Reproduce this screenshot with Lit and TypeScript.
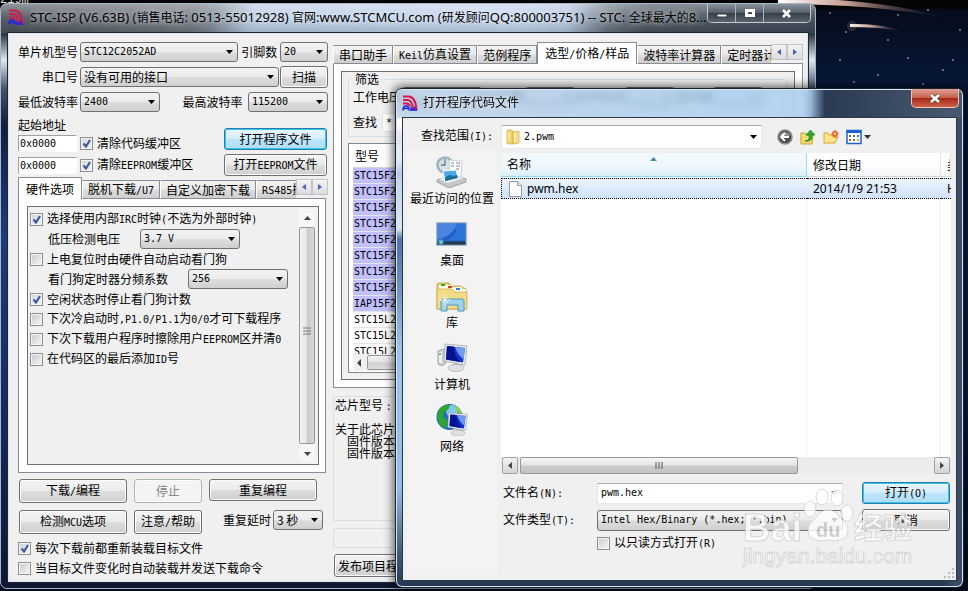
import { LitElement, html, svg, css, nothing } from "lit";
import { customElement, property } from "lit/decorators.js";
import { classMap } from "lit/directives/class-map.js";

/** Splits a label so that its Latin runs take the half-width mono face. */
const mix = (text: string) =>
  text
    .split(/([\x20-\x7e]+)/)
    .filter((part) => part !== "")
    .map((part) => (/^[\x20-\x7e]+$/.test(part) ? html`<span class="latin">${part}</span>` : part));

const logo = svg`
  <g fill="none">
    <path stroke="#d4194f" stroke-width="2" d="M1 1.500h6q7 1 7.500 14M1 5h5q5 1 5 10.500M1 8.500h4q3 1 3 3"/>
    <path stroke="#1b22e8" stroke-width="1.500" d="M1 15.500q0-4.500 3-4.500q3 0 3 4.500M2 13.500h4M9 12v4M12.500 11.500v4M9 15h6"/>
  </g>`;

const controls = css`
  * { box-sizing: border-box; }
  .latin, .mono { font-family: "DejaVu Sans Mono", "Liberation Mono", "Noto Sans CJK SC", monospace; font-size: 10px; }
  label, .text { white-space: nowrap; }
  button, select, input { font: inherit; color: #000; margin: 0; }
  select.mono, input.mono { font-family: "DejaVu Sans Mono", "Liberation Mono", monospace; font-size: 10px; }
  .btn {
    height: 22px; padding: 0; border: 1px solid #707070; border-radius: 3px; white-space: nowrap;
    background: linear-gradient(#f4f4f4, #ebebeb 48%, #dddddd 52%, #cfcfcf);
    box-shadow: inset 0 0 0 1px #fbfbfb; line-height: 18px; text-align: center;
  }
  .btn.hot {
    border-color: #2c7aa8; background: linear-gradient(#eaf6fd, #d5edfa 48%, #bde6fd 52%, #b0dcf5);
    box-shadow: inset 0 0 0 1px #2fc9f4;
  }
  .btn:disabled { color: #838383; border-color: #adb2b5; background: #f4f4f4; }
  .drop {
    appearance: none; height: 20px; padding: 0 16px 0 3px; border: 1px solid #707070; border-radius: 3px;
    background: url('data:image/svg+xml,<svg xmlns="http://www.w3.org/2000/svg" width="7" height="4"><path d="M0 0h7L3.500 4z"/></svg>') no-repeat right 4px center,
      linear-gradient(#f3f3f3, #ebebeb 48%, #dddddd 52%, #d0d0d0);
    line-height: 16px;
  }
  .check { display: flex; align-items: center; gap: 4px; height: 20px; }
  .check input {
    appearance: none; flex: none; width: 13px; height: 13px; border: 1px solid #8e8f8f;
    background: linear-gradient(135deg, #c6cacf, #f6f6f6); box-shadow: inset 0 0 0 1px #f4f4f4;
  }
  .check input:checked {
    background: url('data:image/svg+xml,<svg xmlns="http://www.w3.org/2000/svg" width="11" height="11"><path d="M2.500 5.500l2.500 3L9 2" fill="none" stroke="%233a539b" stroke-width="2"/></svg>') center no-repeat,
      linear-gradient(135deg, #cdd2dc, #f6f6f6);
  }
`;

const windowFrame = css`
  :host { display: flex; flex-direction: column; border-radius: 7px; box-sizing: border-box; }
  .titlebar { display: flex; align-items: center; flex: none; }
  .title { flex: 1; min-width: 0; overflow: hidden; white-space: nowrap; font-family: "Noto Sans", "Noto Sans CJK SC", sans-serif; }
`;

@customElement("tab-strip")
class TabStrip extends LitElement {
  @property({ attribute: false }) tabs: string[] = [];
  @property({ type: Number }) active = 0;

  static styles = [
    controls,
    css`
      :host { display: flex; align-items: flex-end; height: 21px; position: relative; z-index: 1; }
      .tabs { display: flex; align-items: flex-end; flex: 1; min-width: 0; overflow: hidden; height: 22px; margin-bottom: -1px; }
      .tab {
        flex: none; height: 19px; padding: 0 5px; border: 1px solid #898c95; border-left-color: #fff; white-space: nowrap;
        background: linear-gradient(#f2f2f2, #ebebeb 48%, #dddddd 52%, #cfcfcf); line-height: 16px;
      }
      .tab.on { height: 22px; padding: 0 7px; background: #fff; border-color: #898c95; border-bottom: 0; }
      .arrow { flex: none; align-self: flex-start; width: 16px; height: 16px; margin-top: 2px; padding: 0; border: 1px solid #c3c3c8; background: linear-gradient(#f4f4f4, #dcdce0); display: grid; place-items: center; }
    `,
  ];

  render() {
    return html`
      <div class="tabs">
        ${this.tabs.map((t, i) => html`<button class=${classMap({ tab: true, on: i === this.active })}>${mix(t)}</button>`)}
      </div>
      <button class="arrow" aria-label="left"><svg width="4" height="6"><path d="M4 0v6L0 3z" fill="#4a62b0"/></svg></button>
      <button class="arrow" aria-label="right"><svg width="4" height="6"><path d="M0 0v6L4 3z" fill="#4a62b0"/></svg></button>
    `;
  }
}

@customElement("isp-window")
class IspWindow extends LitElement {
  static styles = [
    controls,
    windowFrame,
    css`
      :host {
        padding: 0 6px 5px; border: 1px solid #a8b4c4;
        background:
          linear-gradient(#ffffff60, #ffffff10 14px, #00000020 28px, transparent 29px),
          linear-gradient(100deg, #4c535c 0, #6f7780 190px, #7d8996 210px, #b9cce4 250px, #c3d5ec 500px, #b4c8e0 560px, #6d7986 600px, #48525e 640px, #3e4956 100%) 0 0 / 100% 29px no-repeat,
          linear-gradient(#2b3542 30px, #dfe9f2 56px, #44536b 85px, #0e1f42 120px, #1d3a7c 230px, #142a5c 420px, #0b1733);
      }
      .titlebar { height: 28px; align-items: flex-start; padding-left: 1px; }
      .logo { margin: 5px 6px 0 0; flex: none; }
      .title { height: 27px; padding-top: 1px; line-height: 24px; font-size: 12px; text-shadow: 0 0 5px #ffffffa0, 0 0 8px #ffffff80; }
      .title .latin { font-family: "Noto Sans", sans-serif; font-size: 13px; }
      .caption { display: flex; flex: none; border: 1px solid #c3cad2; border-top: 0; border-radius: 0 0 5px 5px; height: 19px; overflow: hidden; margin-right: -2px; }
      .caption button { width: 28px; padding: 0; border: 0; border-right: 1px solid #aab3bd; background: linear-gradient(#8a929b, #56606b 48%, #36404b 52%, #59646f); display: grid; place-items: center; }
      .caption .close { width: 46px; border: 0; }
      .client {
        flex: 1; min-height: 0; background: #f0f0f0; border: 1px solid #1f2732; outline: 1px solid #dbe3ec; outline-offset: -2px;
        display: grid; grid-template-columns: 310px minmax(0, 1fr); gap: 5px; padding: 9px 5px 6px 10px;
      }
      .left, .right { min-width: 0; display: flex; flex-direction: column; }
      .rows { display: grid; gap: 5px; }
      .row { display: flex; align-items: center; height: 20px; }
      .row .name { width: 62px; padding-right: 2px; text-align: right; }
      .grow { flex: 1; }
      .w48 { width: 48px; } .w50 { width: 50px; } .w80 { width: 80px; } .w100 { width: 100px; } .w158 { width: 158px; } .w199 { width: 199px; }
      .push { margin-left: auto; }
      .start { display: flex; justify-content: space-between; align-items: flex-end; margin-top: 6px; }
      .start .text { line-height: 14px; height: 14px; }
      .addr { display: flex; align-items: center; gap: 3px; height: 22px; }
      .addr > input { width: 59px; height: 17px; border: 1px solid #a0a0a0; border-right-color: #fff; border-bottom-color: #fff; padding: 0 1px; }
      .stack { display: grid; gap: 4px; width: 104px; padding-right: 1px; }
      .left tab-strip { margin-top: 1px; }
      .panel { flex: 1; min-height: 0; background: #fff; border: 1px solid #898c95; padding: 7px; }
      .left .panel { flex: none; height: 275px; padding: 7px 6px 7px 8px; margin-right: 2px; }
      .box { height: 100%; border: 1px solid #707070; background: #f0f0f0; display: flex; }
      .options { flex: 1; padding: 2px 0 0 2px; }
      .options .row .text { padding-left: 18px; }
      .options .drop { margin-left: 20px; }
      .vbar { width: 16px; margin: 2px 3px; background: #f6f6f6; display: flex; flex-direction: column; align-items: center; }
      .vbar svg { flex: none; height: 18px; }
      .thumb { flex: 1; width: 100%; border: 1px solid #979797; border-radius: 2px; background: linear-gradient(90deg, #f3f3f3, #e6e6e6 45%, #c9c9cc 55%, #dadade); display: grid; place-items: center; }
      .actions { display: grid; grid-template-columns: 108px 68px 114px; gap: 7px; padding: 6px 0 0 1px; }
      .actions .btn { height: 24px; }
      .actions .btn.w108 { width: 108px; height: 22px; }
      .delay { display: flex; align-items: center; justify-content: flex-end; height: 20px; gap: 2px; }
      .foot { padding-top: 4px; }
      .right .panel { flex: none; height: 325px; }
      .filter { padding: 7px 7px 6px 6px; flex: 1; min-width: 0; display: flex; flex-direction: column; gap: 6px; }
      fieldset { margin: -9px 0 0; padding: 0 4px; border: 1px solid #d5dfe5; border-radius: 3px; min-width: 0; height: 67px; }
      legend { padding: 0 2px; line-height: 18px; }
      fieldset .row { gap: 1px; }
      .volts { margin-top: -1px; gap: 4px; }
      .volts .drop { flex: none; }
      .find { margin-top: 5px; }
      .find input { width: 120px; height: 19px; border: 1px solid #e3e3e3; margin-left: 4px; padding: 0 3px; }
      .chips { flex: 1; min-height: 0; border: 1px solid #828790; background: #fff; display: flex; flex-direction: column; padding: 0 2px 1px 4px; }
      .scroll { flex: 1; min-height: 0; overflow: hidden; }
      table { border-collapse: separate; border-spacing: 0; width: 100%; table-layout: fixed; }
      th { height: 24px; text-align: left; font-weight: normal; padding: 0 2px; border-bottom: 1px solid #d5d5d5; }
      td { height: 16px; padding: 0 1px; border-bottom: 1px solid #e4e4e4; line-height: 15px; }
      td .mono { vertical-align: top; }
      .lit { background: #c0c0ff; }
      .hbar { flex: none; height: 17px; display: flex; align-items: center; background: #f0f0f0; }
      .hbar svg { width: 14px; }
      .hbar .thumb { height: 15px; background: linear-gradient(#f3f3f3, #e4e4e4 48%, #d0d0d0 52%, #dcdcdc); }
      .info { flex: none; margin-top: 8px; height: 125px; border: 1px solid #dadfe4; padding: 1px; line-height: 12px; overflow: hidden; }
      .info p { margin: 0; white-space: pre; }
      .info .first { line-height: 14px; margin-bottom: 9px; }
      .info .sub { padding-left: 12px; }
      .status { flex: none; height: 20px; border: 1px solid #dadfe4; margin: 7px 0 6px; }
      .publish { width: 80px; height: 23px; margin-left: 1px; }
    `,
  ];

  private option(text: string, checked = false) {
    return html`<label class="check"><input type="checkbox" .checked=${checked} /><span>${mix(text)}</span></label>`;
  }

  render() {
    const chips = [...Array(8).fill("STC15F2K08S2"), "IAP15F2K61S2", "STC15L2K08S2", "STC15L2K16S2", "STC15L2K24S2"];
    return html`
      <div class="titlebar">
        <svg class="logo" width="16" height="16">${logo}</svg>
        <div class="title">${mix("STC-ISP (V6.63B) (销售电话: 0513-55012928) 官网:www.STCMCU.com (研发顾问QQ:800003751) -- STC: 全球最大的8...")}</div>
        <div class="caption">
          <button aria-label="Minimize"><svg width="12" height="12"><path d="M1 7h10v3H1z" fill="#fff" stroke="#333"/></svg></button>
          <button aria-label="Maximize"><svg width="12" height="12"><path d="M2.500 3.500h7v5h-7z" fill="none" stroke="#fff" stroke-width="3"/></svg></button>
          <button class="close" aria-label="Close"><svg width="12" height="11"><path d="M2 2l7 7M9 2l-7 7" stroke="#fff" stroke-width="2.500"/></svg></button>
        </div>
      </div>
      <div class="client">
        <div class="left">
          <div class="rows">
            <div class="row">
              <label class="name" for="mcu">单片机型号</label>
              <select id="mcu" class="drop mono w158"><option>STC12C2052AD</option></select>
              <label class="push" for="pins">引脚数&nbsp;</label>
              <select id="pins" class="drop mono w48"><option>20</option></select>
            </div>
            <div class="row">
              <label class="name" for="port">串口号</label>
              <select id="port" class="drop w199"><option>没有可用的接口</option></select>
              <span class="grow"></span><button class="btn w48">扫描</button>
            </div>
            <div class="row">
              <label class="name" for="low">最低波特率</label>
              <select id="low" class="drop mono w80"><option>2400</option></select>
              <label class="push" for="high">最高波特率&nbsp;&nbsp;</label>
              <select id="high" class="drop mono w80"><option>115200</option></select>
            </div>
          </div>
          <div class="start">
            <div>
              <div class="text">起始地址</div>
              <div class="addr"><input class="mono" aria-label="代码地址" value="0x0000" />${this.option("清除代码缓冲区", true)}</div>
              <div class="addr"><input class="mono" aria-label="EEPROM地址" value="0x0000" />${this.option("清除EEPROM缓冲区", true)}</div>
            </div>
            <div class="stack">
              <button class="btn hot">打开程序文件</button>
              <button class="btn">${mix("打开EEPROM文件")}</button>
            </div>
          </div>
          <tab-strip .tabs=${["硬件选项", "脱机下载/U7", "自定义加密下载", "RS485控制"]}></tab-strip>
          <div class="panel">
            <div class="box">
              <div class="options">
                ${this.option("选择使用内部IRC时钟(不选为外部时钟)", true)}
                <div class="row"><label class="text" for="lvd">低压检测电压</label><select id="lvd" class="drop mono w100"><option>3.7 V</option></select></div>
                ${this.option("上电复位时由硬件自动启动看门狗")}
                <div class="row"><label class="text" for="wdt">看门狗定时器分频系数</label><select id="wdt" class="drop mono w100"><option>256</option></select></div>
                ${this.option("空闲状态时停止看门狗计数", true)}
                ${this.option("下次冷启动时,P1.0/P1.1为0/0才可下载程序")}
                ${this.option("下次下载用户程序时擦除用户EEPROM区并清0")}
                ${this.option("在代码区的最后添加ID号")}
              </div>
              <div class="vbar">
                <svg width="7" height="18"><path d="M0 11h7L3.500 7z" fill="#444"/></svg>
                <div class="thumb"><svg width="8" height="8"><path d="M0 1h8M0 4h8M0 7h8" stroke="#777"/></svg></div>
                <svg width="7" height="18"><path d="M0 8h7L3.500 12z" fill="#444"/></svg>
              </div>
            </div>
          </div>
          <div class="actions">
            <button class="btn">${mix("下载/编程")}</button>
            <button class="btn" disabled>停止</button>
            <button class="btn w108">重复编程</button>
            <button class="btn">${mix("检测MCU选项")}</button>
            <button class="btn">${mix("注意/帮助")}</button>
            <div class="delay"><label for="delay">重复延时</label><select id="delay" class="drop w50"><option>3 秒</option></select></div>
          </div>
          <div class="foot">
            ${this.option("每次下载前都重新装载目标文件", true)}
            ${this.option("当目标文件变化时自动装载并发送下载命令")}
          </div>
        </div>
        <div class="right">
          <tab-strip .active=${3} .tabs=${["串口助手", "Keil仿真设置", "范例程序", "选型/价格/样品", "波特率计算器", "定时器计算器"]}></tab-strip>
          <div class="panel">
            <div class="box">
              <div class="filter">
                <fieldset>
                  <legend>筛选</legend>
                  <div class="row volts">
                    <label for="volt">工作电压</label>
                    <select id="volt" class="drop w80"><option></option></select>
                    <label for="io">I/O口数</label>
                    <select id="io" class="drop w50"><option></option></select>
                    <label for="rom">EEPROM</label>
                    <select id="rom" class="drop w50"><option></option></select>
                    <label for="adc">定时器</label>
                    <select id="adc" class="drop w50"><option></option></select>
                  </div>
                  <div class="row find"><label for="find">查找</label><input id="find" class="mono" value="*" /></div>
                </fieldset>
                <div class="chips">
                  <div class="scroll">
                    <table>
                      <thead><tr><th>型号</th></tr></thead>
                      <tbody>${chips.map((c, i) => html`<tr class=${i < 9 ? "lit" : nothing}><td><span class="mono">${c}</span></td></tr>`)}</tbody>
                    </table>
                  </div>
                  <div class="hbar"><svg width="14" height="8"><path d="M8 0v8L4 4z" fill="#444"/></svg><div class="thumb"></div></div>
                </div>
              </div>
            </div>
          </div>
          <div class="info">
            <p class="first">芯片型号 ${mix(": STC12C2052AD")}</p>
            <p>关于此芯片的说明:</p>
            <p class="sub">固件版本说明</p>
            <p class="sub">固件版本说明</p>
          </div>
          <div class="status"></div>
          <button class="btn publish">发布项目程序</button>
        </div>
      </div>
    `;
  }
}

const monitor = svg`
  <path d="M17 19l9 2v4l-9-2z" fill="#c9ccd0"/>
  <ellipse cx="20" cy="26" rx="8" ry="3.500" fill="#dfe1e3" stroke="#a5a8ac" stroke-width=".6"/>
  <path d="M9 2l22 2-2 19-21-4z" fill="#e4e7ea" stroke="#9b9fa5" stroke-width=".7"/>
  <path d="M11 4l18 2-2 14.500-17-3z" fill="#1430d0"/>
  <path d="M11 4l7 .8q0 9 6 15.200l-14-2.500z" fill="#07138e"/>
  <path d="M19 5l10 1-1.500 11q-6-4-8.500-12z" fill="#6f9df5"/>`;

const places = [
  {
    name: "最近访问的位置",
    icon: svg`
      <path d="M1 24l18-6 11 5v3l-17 6-12-6z" fill="#c4c8cb" stroke="#82878c" stroke-width=".7"/>
      <path d="M3 23l16-5 9 4-16 5z" fill="#e9ebec"/>
      <circle cx="9" cy="9" r="7.500" fill="#d5e2ea" stroke="#9db1bd" stroke-width="2.500"/>
      <path d="M9 3v6H5" fill="none" stroke="#5f7f90" stroke-width="1.300"/>
      <path d="M13 4l13 1-1 16-11-1z" fill="#fcfcfc" stroke="#bcc0c3" stroke-width=".7"/>
      <path d="M15 7h3M20 7h4M20 10h4M20 13h3M15 10h3" stroke="#778b9d"/>
      <path d="M7 15l13-1 2 8-13 4z" fill="#4aa9e8" stroke="#fff"/>
      <path d="M9 22q4-5 8-2l4-1 1 3-13 3z" fill="#1d6f9d"/>`,
  },
  {
    name: "桌面",
    icon: svg`
      <path d="M0 4h31v24H0z" fill="#a9b9cb"/><path d="M1.500 5.500h28v21h-28z" fill="#2060c6"/>
      <path d="M1.500 5.500h20q-4 12-20 16z" fill="#4a86dd"/><path d="M20 5.500h9.500v17H9q14-5 11-17z" fill="#2f74d8"/>
      <path d="M1.500 23.500h28v3h-28z" fill="#243748"/><circle cx="5" cy="24" r="2.500" fill="#39b8e8"/><circle cx="5" cy="24" r="1" fill="#f3c23c"/>`,
  },
  {
    name: "库",
    icon: svg`
      <path d="M1 5q0-2 2-2h10l3 3h8l6 3v20H1z" fill="#e8cd73" stroke="#c29b3d" stroke-width=".8"/>
      <path d="M3 5h13v4H3zM12 7h14v4H12zM18 9h12v4H18z" fill="#fffdf0"/>
      <path d="M5 4h4v2H5z" fill="#24b42d"/><path d="M12 6h4v2h-4z" fill="#cf3f21"/><path d="M20 8h4v2h-4z" fill="#2486cf"/>
      <path d="M1 9h15l3 3h12v17H1z" fill="#f3dc86" stroke="#cfa54a" stroke-width=".8"/>
      <path d="M5 31V21q0-2 2-2h19q2 0 2 2v10h-6v-6H11v6z" fill="#9fd3ea" stroke="#4c9abe"/>
      <path d="M9 14v12M3 20h12M6 17l6 6M12 17l-6 6" stroke="#fff" stroke-width=".8"/>`,
  },
  {
    name: "计算机",
    icon: svg`
      <path d="M2 9l5-2 3 1v13l-4 3-4-2z" fill="#c8cbcf" stroke="#8c9095" stroke-width=".7"/>
      <path d="M3 10l3-.5v12l-3-1z" fill="#eef0f1"/><circle cx="4" cy="12" r="1" fill="#35b52b"/>${monitor}`,
  },
  {
    name: "网络",
    icon: svg`
      <circle cx="13.500" cy="13" r="13" fill="#1f6dbc"/>
      <circle cx="16" cy="7" r="6" fill="#7cc8ef"/>
      <path d="M3 6q5-6 11-5l-2 5-4 2-1 5 5 4-2 7-4-1q-7-8-3-17z" fill="#2fa52d"/>
      <path d="M18 1q7 3 8 9l-5-2z" fill="#8dd14e"/>
      <g transform="translate(5 7) scale(.85 .85)">${monitor}</g>`,
  },
];

@customElement("open-dialog")
class OpenDialog extends LitElement {
  static styles = [
    controls,
    windowFrame,
    css`
      :host {
        padding: 0 6px 6px; border: 1px solid #1c222b;
        background: linear-gradient(90deg, #b4cbe5c0, #a8cdf0d0 60%, #a9cbeed0 calc(100% - 152px), #33435bd0 calc(100% - 138px), #5f6f82c0) 0 0 / 100% 29px no-repeat,
          linear-gradient(90deg, transparent calc(100% - 20px), #3c4c66 calc(100% - 7px)) 0 29px no-repeat,
          linear-gradient(transparent 29px, #c3d9ee 100px, #d8e6f2 140px, #4f73ac 150px, #6f92c0 200px, #9cc4ec 260px, #92bce6 400px, #46617e 460px, #253650);
        backdrop-filter: blur(3px);
        box-shadow: inset 0 0 0 1px #d8e6f4, 0 0 10px 2px #000000a0;
      }
      .titlebar { height: 28px; gap: 5px; padding: 0; }
      .titlebar svg { flex: none; }
      .title { font-size: 12px; text-shadow: 0 0 6px #fff; }
      .close { align-self: flex-start; width: 48px; height: 19px; padding: 0; border: 1px solid #e9c5bd; border-top: 0; border-radius: 0 0 5px 5px; background: linear-gradient(#dfa094, #c8604e 48%, #a52a16 52%, #d0604a); display: grid; place-items: center; margin-right: -2px; }
      .client {
        flex: 1; min-height: 0; border: 1px solid #2d3846; background: #f0f0f0; padding: 7px 5px 5px 4px;
        display: grid; grid-template-columns: 90px minmax(0, 1fr); grid-template-rows: 24px minmax(0, 1fr); column-gap: 4px; row-gap: 2px;
      }
      .look { text-align: right; line-height: 20px; padding-right: 4px; }
      .bar { display: flex; align-items: center; gap: 7px; }
      .folder { position: relative; flex: 0 1 261px; margin-right: 8px; }
      .folder svg { position: absolute; left: 5px; top: 4px; }
      .folder .drop { width: 100%; height: 24px; padding-left: 22px; background-color: #fff; }
      .white.drop { border: 1px solid #abadb3; border-color: #abadb3 #e3e9ef #e3e9ef #e2e3ea; border-radius: 0; background: #fff url('data:image/svg+xml,<svg xmlns="http://www.w3.org/2000/svg" width="7" height="4"><path d="M0 0h7L3.500 4z"/></svg>') no-repeat right 4px center; }
      .tool { padding: 0; border: 0; background: none; display: flex; }
      .places { background: #f3f3f3; display: flex; flex-direction: column; gap: 10px; padding-top: 5px; }
      .place { padding: 0; border: 0; background: none; display: grid; justify-items: center; line-height: 18px; font-size: 12px; height: 52px; white-space: nowrap; }
      .main { min-width: 0; display: flex; flex-direction: column; }
      .files { flex: 1; min-height: 0; background: #fff; margin-top: 2px; overflow: hidden; display: flex; flex-direction: column; }
      table { width: 100%; border-collapse: separate; border-spacing: 0; table-layout: fixed; font-family: "Noto Sans", "Noto Sans CJK SC", sans-serif; }
      .c1 { width: 306px; } .c3 { width: 10px; }
      th { height: 24px; padding: 2px 6px 0; font-size: 12px; font-weight: normal; text-align: left; border-bottom: 1px solid #d5d5d5; border-right: 1px solid #e2e4e8; background: linear-gradient(#fff 50%, #f5f6f8); overflow: hidden; white-space: nowrap; }
      th.sorted { padding-top: 0; background: linear-gradient(#f2f9fc 50%, #d9eff9); border-color: #96d9f9; }
      .sort { display: block; margin: 0 auto -4px; }
      td { height: 21px; padding: 0 6px; font-size: 12px; line-height: 18px; white-space: nowrap; overflow: hidden; border: 0 dotted #000; border-width: 1px 0; background: linear-gradient(#edf4fd, #cfe1fb); }
      tbody::before { content: ""; display: block; height: 1px; }
      td:first-child { border-left-width: 1px; }
      .file { display: flex; align-items: center; gap: 3px; }
      .lead { padding-left: 5px; }
      .blank { flex: 1; display: grid; grid-template-columns: 306px 1fr 10px; }
      .blank i { border-right: 1px solid #eef4fb; }
      .scroll { flex: none; height: 17px; display: flex; gap: 2px; background: #ececec; padding: 0 1px; margin-bottom: 8px; }
      .scroll button { width: 16px; padding: 0; border: 1px solid #a0a0a0; border-radius: 2px; background: linear-gradient(#f3f3f3, #d4d4d4); display: grid; place-items: center; }
      .scroll .thumb { width: 62%; border: 1px solid #979797; border-radius: 2px; background: linear-gradient(#f6f6f6, #e4e4e4 48%, #cdcdd0 52%, #c3c3c6); display: grid; place-items: center; }
      .space { flex: 1; }
      .form { flex: none; display: grid; grid-template-columns: 92px minmax(0, 1fr) 88px; column-gap: 2px; row-gap: 5px; align-items: center; padding: 0 1px 22px 2px; }
      .form .drop, .form .entry { width: calc(100% - 17px); height: 21px; }
      .form .btn { width: 88px; }
      .entry { display: flex; align-items: center; background: #fff; border: 1px solid #abadb3; border-color: #abadb3 #e3e9ef #e3e9ef #e2e3ea; padding-right: 4px; }
      .entry input { flex: 1; min-width: 0; border: 0; padding: 0 3px; background: none; outline: none; }
      .form .check { grid-column: 2; margin-top: -3px; }
      .grip { position: absolute; right: 9px; bottom: 9px; }
    `,
  ];

  render() {
    return html`
      <div class="titlebar">
        <svg width="16" height="16">${logo}</svg>
        <div class="title">打开程序代码文件</div>
        <button class="close" aria-label="Close"><svg width="12" height="11"><path d="M2 2l8 7M10 2L2 9" stroke="#543" stroke-width="4"/><path d="M2 2l8 7M10 2L2 9" stroke="#fff" stroke-width="2.500"/></svg></button>
      </div>
      <div class="client">
        <label class="look" for="dir">${mix("查找范围(I):")}</label>
        <div class="bar">
          <div class="folder">
            <select id="dir" class="drop white mono"><option>2.pwm</option></select>
            <svg width="14" height="16"><path d="M1 1h5l1 1v13H1z" fill="#efd36c" stroke="#d8b64c" stroke-width=".7"/><path d="M7 3l6-1v12l-6 1z" fill="#f5e08a" stroke="#d0ab3c" stroke-width=".7"/><path d="M8.500 4v8M3 3v10" stroke="#fff6cf"/></svg>
          </div>
          <button class="tool" aria-label="Back"><svg width="16" height="16"><circle cx="8" cy="8" r="7" fill="#4b4b4b" stroke="#8e8e8e" stroke-width="1.500"/><path d="M2 6q6-6 12 0-6 3-12 0" fill="#8c8c8c"/><path d="M8 4L4 8l4 4M4 8h8" fill="none" stroke="#fff" stroke-width="2"/></svg></button>
          <button class="tool" aria-label="Up"><svg width="16" height="16"><path d="M1 4h4l1 2h7l-1 9H1z" fill="#f6dc75" stroke="#c89d2c"/><path d="M5 12q5 0 4-6H6l4.500-5L15 6h-3q1 7-7 6z" fill="#2fae2b" stroke="#14791a" stroke-width=".7"/></svg></button>
          <button class="tool" aria-label="New folder"><svg width="16" height="16"><path d="M1 4h4l1 2h6v2h3l-3 6H1z" fill="#fbe58b" stroke="#d6a433"/><path d="M12 1v8M8.500 5h7M9.500 2.500l5 5M14.500 2.500l-5 5" stroke="#e8501c" stroke-width="1.300"/><circle cx="12" cy="5" r="1.200" fill="#fff08a"/></svg></button>
          <button class="tool" aria-label="View"><svg width="27" height="16"><path d="M1 1.500h14v13H1z" fill="#fff" stroke="#1d63cc" stroke-width="1.500"/><path d="M.5 1h15v3H.5z" fill="#1d63cc"/><path d="M3 6h2v2H3zM11 6h2v2h-2zM7 10h2v2H7z" fill="#556b9c"/><path d="M7 6h2v2H7z" fill="#2ba33f"/><path d="M3 10h2v2H3z" fill="#d3522e"/><path d="M11 10h2v2h-2z" fill="#d7a321"/><path d="M18 6h7l-3.500 4z" fill="#333"/></svg></button>
        </div>
        <nav class="places">
          ${places.map((p) => html`<button class="place"><svg width="32" height="32">${p.icon}</svg><span>${p.name}</span></button>`)}
        </nav>
        <div class="main">
          <div class="files">
            <table>
              <colgroup><col class="c1" /><col /><col class="c3" /></colgroup>
              <thead><tr><th class="sorted"><svg class="sort" width="7" height="4"><path d="M0 4h7L3.500 0z" fill="#4c8fae"/></svg>名称</th><th>修改日期</th><th>类型</th></tr></thead>
              <tbody><tr>
                <td class="lead"><div class="file"><svg width="17" height="17"><path d="M2.500 1.500h8l4 4v11h-12z" fill="#fff" stroke="#9a9a9a"/><path d="M10.500 1.500v4h4" fill="#e6e6e6" stroke="#9a9a9a"/></svg>pwm.hex</div></td>
                <td>2014/1/9 21:53</td><td>HEX</td>
              </tr></tbody>
            </table>
            <div class="blank"><i></i><i></i></div>
          </div>
          <div class="scroll">
            <button aria-label="Scroll left"><svg width="4" height="7"><path d="M4 0v7L0 3.500z" fill="#444"/></svg></button>
            <div class="thumb"><svg width="8" height="7"><path d="M1 0v7M4 0v7M7 0v7" stroke="#555"/></svg></div>
            <span class="space"></span>
            <button aria-label="Scroll right"><svg width="4" height="7"><path d="M0 0v7L4 3.500z" fill="#444"/></svg></button>
          </div>
          <form class="form" @submit=${(e: Event) => e.preventDefault()}>
            <label for="name">${mix("文件名(N):")}</label>
            <div class="entry"><input id="name" class="mono" value="pwm.hex" /><svg width="7" height="4"><path d="M0 0h7L3.500 4z" fill="#777"/></svg></div>
            <button class="btn hot">${mix("打开(O)")}</button>
            <label for="type">${mix("文件类型(T):")}</label>
            <select id="type" class="drop mono"><option>Intel Hex/Binary (*.hex; *.bin)</option></select>
            <button class="btn" type="button">取消</button>
            <label class="check"><input type="checkbox" /><span>${mix("以只读方式打开(R)")}</span></label>
          </form>
        </div>
      </div>
      <svg class="grip" width="10" height="10"><path d="M8 0h2v2H8zM4 4h2v2H4zM8 4h2v2H8zM0 8h2v2H0zM4 8h2v2H4zM8 8h2v2H8z" fill="#bdbdbd"/></svg>
    `;
  }
}

@customElement("app-root")
class AppRoot extends LitElement {
  static styles = css`
    :host {
      display: block; position: relative; overflow: hidden; height: 100vh; min-height: 560px;
      background: linear-gradient(#050a18, #071736 80px, #0b1f48 60%, #050c1e);
      font: 12px/16px "Noto Sans CJK SC", sans-serif; color: #000;
    }
    .sky { position: absolute; top: 0; right: 0; }
    .caption { position: absolute; top: -8px; left: 0; color: #ddd; font: 12px/16px "Liberation Mono", monospace; }
    .strip { height: 9px; background: #050505; }
    isp-window { position: absolute; inset: 3px 152px 2px 0; }
    open-dialog { position: absolute; inset: 88px 4px 3px 395px; }
    .mark { position: absolute; right: 46px; bottom: 20px; opacity: .8; pointer-events: none; font-family: "Liberation Sans", "Noto Sans CJK SC", sans-serif; }
  `;

  render() {
    const stars = [[12, 13], [28, 32], [70, 40], [110, 10], [125, 70], [60, 75], [22, 60], [142, 30], [90, 58], [36, 82], [105, 84], [80, 15], [135, 60]];
    return html`
      <div class="strip"></div>
      <div class="caption">219m</div>
      <svg class="sky" width="270" height="90">
        <defs>
          <linearGradient id="tail"><stop offset="0" stop-color="#fff"/><stop offset=".4" stop-color="#c99f94"/><stop offset="1" stop-color="#4a3a48" stop-opacity="0"/></linearGradient>
        </defs>
        <path d="M80 0h60q60 4 108 18-70-14-168-14z" fill="url(#tail)"/>
        <path d="M152 24q30-1 52 7-24-4-52-4z" fill="url(#tail)"/>
        <circle cx="154" cy="26" r="5" fill="#b9a48c" opacity=".2"/>
        ${stars.map(([x, y]) => svg`<circle cx=${x + 120} cy=${y} r="1" fill="#9fc0dc" opacity=".7"/>`)}
      </svg>
      <isp-window></isp-window>
      <open-dialog></open-dialog>
      <svg class="mark" width="180" height="86">
        <g fill="#fff" stroke="#d0d0d0">
          <ellipse cx="68" cy="24" rx="6" ry="8"/><ellipse cx="80" cy="12" rx="6" ry="8"/>
          <ellipse cx="95" cy="13" rx="6" ry="8"/><ellipse cx="105" cy="28" rx="6" ry="8"/>
          <path d="M86 25q8 0 12 8 11 7 7 17-5 8-19 5-14 3-19-5-4-10 7-17 4-8 12-8z"/>
          <text x="1" y="56" font-size="38" font-weight="bold">Bai</text>
          <text x="112" y="54" font-size="29" font-weight="bold">经验</text>
          <text x="1" y="78" font-size="21">jingyan.baidu.com</text>
        </g>
        <text x="74" y="52" font-size="20" font-weight="bold" fill="#c9c9c9">du</text>
      </svg>
    `;
  }
}
